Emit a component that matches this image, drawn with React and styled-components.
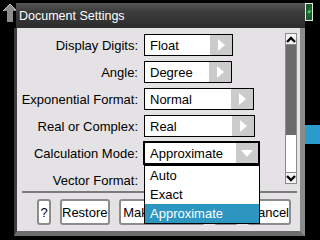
import React from "react";
import styled, { createGlobalStyle } from "styled-components";

const GlobalStyle = createGlobalStyle`
  html, body {
    margin: 0;
    padding: 0;
    background: #000;
  }
  body {
    width: 320px;
    height: 240px;
    overflow: hidden;
    font-family: "Liberation Sans", Arial, sans-serif;
  }
`;

const Screen = styled.div`
  position: relative;
  width: 320px;
  height: 240px;
  background: #000;
  display: flex;
  flex-direction: column;
`;

const TopBar = styled.div`
  display: flex;
  justify-content: space-between;
  align-items: flex-start;
  padding: 3px 7px 0 1px;
  height: 20px;
`;

const SideCell = styled.div`
  align-self: flex-end;
  width: 15px;
  height: 19px;
  margin-top: 102px;
  background: #2b9bcb;
`;

// the modal sits over the document page
const Dialog = styled.div`
  position: absolute;
  left: 14px;
  top: 3px;
  width: 291px;
  height: 233px;
  display: flex;
  flex-direction: column;
`;

const TitleBar = styled.div`
  height: 25px;
  margin-left: 2px;
  display: flex;
  align-items: center;
  padding-left: 3px;
  background: linear-gradient(#565656, #3c3c3c 35%, #2c2c2c);
  color: #fff;
  font-size: 12.5px;
`;

const Body = styled.div`
  flex: 1;
  display: flex;
  flex-direction: column;
  background: #e5e2e5;
  border-left: 3px solid #3e3e3e;
  border-right: 5px solid #8a8a8a;
  border-bottom: 5px solid #6c6c6c;
  min-height: 0;
`;

const Pane = styled.div`
  height: 161px;
  display: flex;
`;

const SettingsGrid = styled.div`
  flex: 1;
  display: grid;
  grid-template-columns: 121px 1fr;
  grid-auto-rows: 22px;
  column-gap: 6px;
  row-gap: 5px;
  padding-top: 6px;
  align-content: start;
`;

const Label = styled.div`
  display: flex;
  align-items: center;
  justify-content: flex-end;
  font-size: 13px;
  color: #000;
  white-space: nowrap;
`;

const FieldCell = styled.div`
  position: relative;
  display: flex;
`;

const Field = styled.div`
  box-sizing: border-box;
  width: ${(p) => p.$w}px;
  height: 22px;
  display: flex;
  background: #fff;
  border: 1px solid #000;
  outline: ${(p) => (p.$focused ? "1px solid #000" : "none")};
`;

const FieldText = styled.span`
  flex: 1;
  display: flex;
  align-items: center;
  padding-left: 5px;
  font-size: 13px;
  color: #000;
  white-space: nowrap;
`;

const FieldArrow = styled.span`
  width: 22px;
  display: flex;
  align-items: center;
  justify-content: center;
  background: #cbcbcb;
`;

const List = styled.div`
  position: absolute;
  top: 23px;
  left: 0;
  box-sizing: border-box;
  width: ${(p) => p.$w + 1}px;
  background: #fff;
  border: 1px solid #000;
  z-index: 2;
`;

const ListItem = styled.div`
  height: 19px;
  display: flex;
  align-items: center;
  padding-left: 5px;
  font-size: 13px;
  color: ${(p) => (p.$active ? "#fff" : "#000")};
  background: ${(p) => (p.$active ? "#2c95c0" : "#fff")};
`;

const Scrollbar = styled.div`
  width: 12px;
  margin: 5px 3px 5px 0;
  display: flex;
  flex-direction: column;
`;

const ScrollButton = styled.div`
  box-sizing: border-box;
  height: 12px;
  display: flex;
  align-items: center;
  justify-content: center;
  background: #f4f4f4;
  border: 1px solid #8a8a8a;
`;

const Track = styled.div`
  flex: 1;
  display: flex;
  flex-direction: column;
  border: 1px solid #8a8a8a;
  border-top: none;
  border-bottom: none;
  background: #fff;
`;

const Thumb = styled.div`
  height: 90px;
  background: #6b6b6b;
`;

const Separator = styled.div`
  height: 2px;
  margin: 2px 3px 0 5px;
  background: #7b7b7b;
`;

const ButtonRow = styled.div`
  display: flex;
  gap: 9px;
  padding: 6px 0 0 20px;
`;

const Button = styled.div`
  box-sizing: border-box;
  height: 26px;
  min-width: ${(p) => p.$min || 0}px;
  display: flex;
  align-items: center;
  justify-content: center;
  padding: 0;
  background: #fff;
  border: 2px solid #8c8c8c;
  border-radius: 3px;
  font-size: 13px;
  color: #000;
  white-space: nowrap;
`;

const settings = [
  { label: "Display Digits:", value: "Float", w: 89 },
  { label: "Angle:", value: "Degree", w: 88 },
  { label: "Exponential Format:", value: "Normal", w: 110 },
  { label: "Real or Complex:", value: "Real", w: 111 },
  { label: "Calculation Mode:", value: "Approximate", w: 115, open: true },
  { label: "Vector Format:", value: "Rectangular", w: 115 },
];

const options = ["Auto", "Exact", "Approximate"];

function RightTri() {
  return (
    <svg width="7" height="12" viewBox="0 0 7 12">
      <polygon points="0,0 7,6 0,12" fill="#fff" />
    </svg>
  );
}

function DownTri() {
  return (
    <svg width="12" height="7" viewBox="0 0 12 7">
      <polygon points="0,0 12,0 6,7" fill="#fff" />
    </svg>
  );
}

function Chevron({ up }) {
  return (
    <svg width="10" height="7" viewBox="0 0 10 7">
      <polyline
        points={up ? "1,6 5,2 9,6" : "1,1 5,5 9,1"}
        fill="none"
        stroke="#000"
        strokeWidth="2.4"
      />
    </svg>
  );
}

function HomeArrow() {
  return (
    <svg width="16" height="19" viewBox="0 0 16 19">
      <polygon points="9,1 16,8 12,8 12,19 6,19 6,8 2,8" fill="#8c8c8c" />
      <polyline points="2,8 9,1 16,8" fill="none" stroke="#c4c4c4" strokeWidth="1" />
    </svg>
  );
}

function Battery() {
  return (
    <svg width="8" height="18" viewBox="0 0 8 18">
      <rect x="0.5" y="0.5" width="7" height="17" fill="#1c5b2c" stroke="#e8e8e8" />
      <polygon points="6,3 2,10 4.5,10 2,15 6.5,7.5 4,7.5" fill="#3fd05a" />
    </svg>
  );
}

export default function App() {
  return (
    <>
      <GlobalStyle />
      <Screen>
        <TopBar>
          <HomeArrow />
          <Battery />
        </TopBar>
        <SideCell />

        <Dialog>
          <TitleBar>Document Settings</TitleBar>
          <Body>
            <Pane>
              <SettingsGrid>
                {settings.map((s) => (
                  <React.Fragment key={s.label}>
                    <Label>{s.label}</Label>
                    <FieldCell>
                      <Field $w={s.w} $focused={s.open}>
                        <FieldText>{s.value}</FieldText>
                        <FieldArrow>{s.open ? <DownTri /> : <RightTri />}</FieldArrow>
                      </Field>
                      {s.open && (
                        <List $w={s.w}>
                          {options.map((o) => (
                            <ListItem key={o} $active={o === s.value}>
                              {o}
                            </ListItem>
                          ))}
                        </List>
                      )}
                    </FieldCell>
                  </React.Fragment>
                ))}
              </SettingsGrid>
              <Scrollbar>
                <ScrollButton>
                  <Chevron up />
                </ScrollButton>
                <Track>
                  <Thumb />
                </Track>
                <ScrollButton>
                  <Chevron />
                </ScrollButton>
              </Scrollbar>
            </Pane>
            <Separator />
            <ButtonRow>
              <Button $min={14}>?</Button>
              <Button>Restore</Button>
              <Button $min={86}>Make Default</Button>
              <Button $min={24}>OK</Button>
              <Button>Cancel</Button>
            </ButtonRow>
          </Body>
        </Dialog>
      </Screen>
    </>
  );
}
